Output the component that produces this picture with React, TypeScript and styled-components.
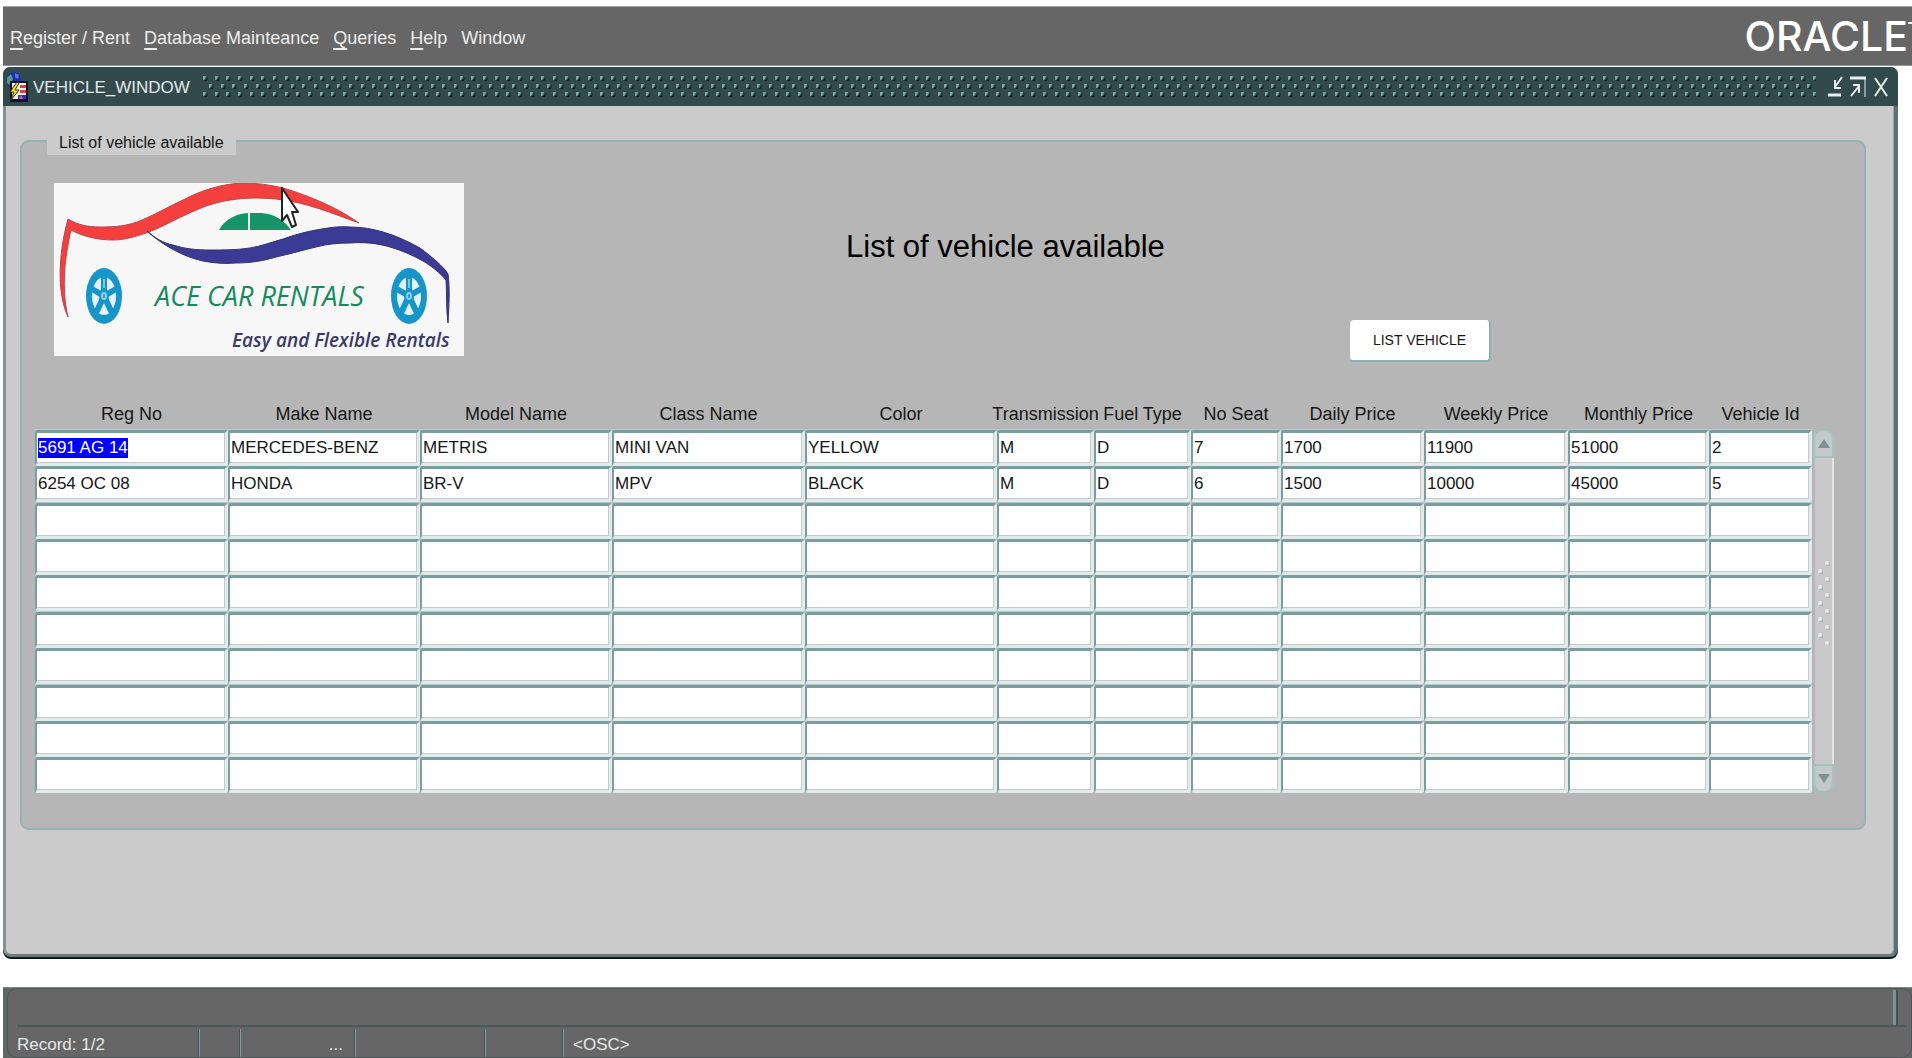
import React, { useEffect, useRef } from "react";
import styled, { createGlobalStyle } from "styled-components";

const teal = "#7a9ea0";
const slate = "#324a4b";
const chrome = "#666666";
const canvas = "#cbcbcb";
const panel = "#b6b6b6";

const GlobalStyle = createGlobalStyle`
  *, *::before, *::after { box-sizing: border-box; }
  body {
    margin: 0;
    background: #fff;
    color: #161616;
    font: 17px/24px "Liberation Sans", Arial, sans-serif;
  }
  button, input { font: inherit; color: inherit; }
`;

const Page = styled.div`
  display: flex;
  flex-direction: column;
  min-height: 100vh;
  padding: 6px 0 0 3px;
  overflow: hidden;
`;

const MenuBar = styled.header`
  display: flex;
  justify-content: space-between;
  align-items: center;
  height: 60px;
  padding-left: 7px;
  background: ${chrome};
  border-top: 1px solid #9aa5a5;
  border-bottom: 1px solid #8d9999;
  color: #ececec;
`;

const Menus = styled.nav`
  display: flex;
  gap: 14px;
  font-size: 18px;
`;

const MenuItem = styled.button`
  padding: 4px 0 0;
  border: 0;
  background: none;
  white-space: nowrap;

  u {
    text-decoration-thickness: 2px;
    text-underline-offset: 4px;
  }
`;

const Brand = styled.div`
  display: flex;
  align-items: flex-start;
  font: 500 41px/44px Inter, "Liberation Sans", sans-serif;
  color: #fff;

  &::after {
    content: "";
    width: 4px;
    height: 2px;
    margin-top: 8px;
    background: #fff;
  }
`;

const Window = styled.main`
  display: flex;
  flex: 1;
  flex-direction: column;
  margin: 1px 14px 30px 0;
  background: ${canvas};
  border: solid;
  border-width: 0 4px 3px 3px;
  border-color: ${slate} #5c7274 #6c7c7c #7c9597;
  border-radius: 8px;
  box-shadow: inset -1px 0 0 #93a7a8, 0 2px 0 #0c1a1c;
`;

const TitleBar = styled.div`
  display: flex;
  align-items: center;
  gap: 5px;
  height: 39px;
  margin: 0 -4px 0 -3px;
  padding: 0 9px 0 3px;
  background: ${slate};
  border-radius: 7px 7px 0 0;
  color: #e4e9e9;
`;

const WindowTitle = styled.h1`
  margin: 0;
  padding-top: 2px;
  font-size: 17px;
  font-weight: 400;
`;

const DotField = styled.svg`
  flex: 1;
  min-width: 0;
  height: 22px;
  margin: 0 6px 0 8px;
`;

const WindowControls = styled.div`
  display: flex;
  gap: 7px;
`;

const ControlButton = styled.button`
  display: grid;
  place-items: center;
  width: 16px;
  height: 24px;
  padding: 0;
  border: 0;
  background: none;
  color: #e8eeee;
`;

const WindowBody = styled.div`
  padding: 21px 28px 20px 14px;
`;

const Group = styled.fieldset`
  min-width: 0;
  margin: 0;
  padding: 0 30px 35px 13px;
  background: ${panel};
  border: 2px solid #94b3b5;
  border-radius: 9px;
`;

const GroupLabel = styled.legend`
  height: 28px;
  margin-left: 12px;
  padding: 4px 12px 0 12px;
  background: ${canvas};
  font-size: 16px;
`;

const Banner = styled.div`
  display: grid;
  grid-template-columns: 811fr 504fr 484fr;
  align-items: start;
  height: 242px;
  padding-top: 28px;
`;

const LogoFrame = styled.div`
  position: relative;
  width: 410px;
  height: 173px;
  margin-left: 19px;
  background: #f7f7f7;
`;

const Pointer = styled.svg`
  position: absolute;
  left: 227px;
  top: 4px;
`;

const Heading = styled.h2`
  margin: 0;
  padding-top: 42px;
  color: #000;
  font-size: 31px;
  font-weight: 400;
  line-height: 44px;
  white-space: nowrap;
`;

const ListButton = styled.button`
  justify-self: start;
  width: 141px;
  height: 42px;
  margin-top: 137px;
  padding: 0;
  background: #fff;
  border: solid #8fb0b2;
  border-width: 0 2px 2px 0;
  border-radius: 4px;
  font-size: 14px;
`;

const Block = styled.div`
  display: flex;
`;

const Grid = styled.table`
  flex: 1;
  width: 100%;
  min-width: 0;
  table-layout: fixed;
  border-collapse: collapse;
`;

const HeadCell = styled.th`
  height: 32px;
  padding: 2px 0 0;
  font-size: 18px;
  font-weight: 400;

  span {
    display: flex;
    justify-content: center;
    white-space: nowrap;
  }
`;

const Row = styled.tr`
  height: 36px;
  &:nth-child(5n + 1), &:nth-child(5n + 3) { height: 37px; }
`;

const Cell = styled.td`
  height: inherit;
  padding: 0;
  background: #b9c6c6;
`;

const Field = styled.input`
  display: block;
  width: 100%;
  height: 36px;
  padding: 0 0 0 1px;
  background: #fff;
  border: solid;
  border-width: 3px 3px 3px 2px;
  border-color: ${teal} #e2ebeb #e2ebeb ${teal};
  border-radius: 3px;
  box-shadow: inset -1px -1px 0 #c9c9c9;
  line-height: 30px;
  outline: 0;

  &::selection { background: #0000ff; color: #fff; }
`;

const ScrollBar = styled.div`
  display: flex;
  flex: none;
  flex-direction: column;
  width: 21px;
  margin: 32px 0 0 1px;
`;

const ScrollButton = styled.button<{ $end?: boolean }>`
  display: grid;
  place-items: center;
  height: 29px;
  padding: 0;
  background: #c4c8c8;
  border: 2px solid #a5c2c3;
  border-radius: ${(p) => (p.$end ? "2px 2px 10px 10px" : "10px 10px 2px 2px")};
`;

const Thumb = styled.div`
  display: grid;
  flex: 1;
  place-items: center;
  margin: 0 0 0 2px;
  padding-bottom: 16px;
  background: #c9c9c9;
  border-right: 2px solid #e4e4e4;
`;

const StatusBar = styled.footer`
  height: 71px;
  padding-left: 4px;
  background: #5f6664;
  border-top: 1px solid #7f8c8b;
`;

const StatusInner = styled.div`
  height: 70px;
  background: ${chrome};
  border: 1px solid #465856;
  border-radius: 10px;
`;

const MessageLine = styled.div`
  display: flex;
  justify-content: flex-end;
  height: 38px;
  margin: 0 6px 0 9px;
  padding: 1px 7px 0 0;
  border-bottom: 2px solid #4c5856;

  &::after {
    content: "";
    width: 5px;
    background: #3f5558;
    border-left: 3px solid #7b9292;
  }
`;

const StatusLine = styled.div`
  display: flex;
  height: 30px;
  padding-top: 2px;
  color: #e6e6e6;
`;

const StatusCell = styled.div<{ $width?: number; $end?: boolean }>`
  flex: ${(p) => (p.$width ? `0 0 ${p.$width}px` : "1")};
  padding: 4px 12px 0 9px;
  text-align: ${(p) => (p.$end ? "right" : "left")};
  border-right: ${(p) => (p.$width ? "1px solid #7fa0a0" : "0")};
  box-shadow: ${(p) => (p.$width ? "inset -1px 0 0 #3f5558" : "none")};
`;

const menus = [
  { key: "R", rest: "egister / Rent" },
  { key: "D", rest: "atabase Mainteance" },
  { key: "Q", rest: "ueries" },
  { key: "H", rest: "elp" },
  { key: "", rest: "Window" },
];

const columns = [
  { label: "Reg No", width: 193 },
  { label: "Make Name", width: 192 },
  { label: "Model Name", width: 192 },
  { label: "Class Name", width: 193 },
  { label: "Color", width: 192 },
  { label: "Transmission", width: 97 },
  { label: "Fuel Type", width: 97 },
  { label: "No Seat", width: 90 },
  { label: "Daily Price", width: 143 },
  { label: "Weekly Price", width: 144 },
  { label: "Monthly Price", width: 141 },
  { label: "Vehicle Id", width: 103 },
];

const vehicles = [
  ["5691 AG 14", "MERCEDES-BENZ", "METRIS", "MINI VAN", "YELLOW", "M", "D", "7", "1700", "11900", "51000", "2"],
  ["6254 OC 08", "HONDA", "BR-V", "MPV", "BLACK", "M", "D", "6", "1500", "10000", "45000", "5"],
];

const rows = Array.from({ length: 10 }, (_, i) => vehicles[i] ?? columns.map(() => ""));

const FormsIcon = () => (
  <svg width="22" height="32" viewBox="0 0 22 32" aria-hidden="true">
    <ellipse cx="8" cy="9" rx="7" ry="8" fill="#1f2fb4" />
    <path d="M1 7 L5 3 L7 8 L4 14 L1 12Z" fill="#4f9a8c" />
    <path d="M9 2 L13 4 L12 8 L9 6Z" fill="#5a74e0" />
    <rect x="4" y="10" width="18" height="21" fill="#101030" />
    <rect x="6" y="12" width="14" height="16" fill="#f0f0f4" />
    <path d="M14 14h6v3h-6zM14 19h6v3h-6z" fill="#e0404a" />
    <path d="M12 24h8v4h-8z" fill="#2436c8" />
    <path d="M15 24l2 4h-4z" fill="#e86a50" />
    <path d="M11 11 L4 21 L8 21 L5 29 L13 19 L9 19 L13 12Z" fill="#f5e02a" stroke="#3a3410" strokeWidth="1" />
  </svg>
);

const Dot = ({ x, y }: { x: number; y: number }) => (
  <>
    <path d={`M${x + 1} ${y + 5} L${x + 5} ${y + 1} L${x + 4} ${y + 5}Z`} fill="#0c2022" />
    <path d={`M${x} ${y} h3 l-1 3 l-1 1 h-1z`} fill="#7aaaa8" />
  </>
);

const TitleDots = () => (
  <DotField aria-hidden="true">
    <defs>
      <pattern id="dots" width="35" height="22" patternUnits="userSpaceOnUse">
        {[0, 12, 23].map((x) => (
          <g key={x}>
            <Dot x={x} y={0} />
            <Dot x={x + 6} y={8} />
            <Dot x={x} y={16} />
          </g>
        ))}
      </pattern>
    </defs>
    <rect width="100%" height="22" fill="url(#dots)" />
  </DotField>
);

const Wheel = ({ x }: { x: number }) => (
  <g transform={`translate(${x} 113)`}>
    <ellipse rx="18" ry="28" fill="#1595c8" />
    <ellipse rx="12" ry="19" fill="#e2f1f8" />
    <g stroke="#1595c8" strokeWidth="6">
      <path d="M0 0V-20M0 0L12 -7M0 0L8 17M0 0L-8 17M0 0L-12 -7" />
    </g>
    <path d="M0 -8V-17" stroke="#7cc6e2" strokeWidth="2" />
    <ellipse rx="5" ry="7" fill="#1595c8" />
    <ellipse rx="3" ry="4" fill="#8fd0e8" />
    <ellipse rx="1" ry="2" fill="#1595c8" />
  </g>
);

const Logo = () => (
  <svg width="410" height="173" viewBox="0 0 410 173" role="img" aria-label="Ace Car Rentals">
    <path
      d="M14 36 C24 42 34 44 46 44 C62 44 74 43 88 37 C102 31 114 24 129 17 C148 7 167 1 189 0 C203 0 217 2 229 5 C256 13 284 25 305 40 C280 31 252 19 222 16 C200 14 181 15 162 20 C150 23 140 28 129 33 C116 39 104 46 92 50 C80 54 70 57 59 57 C45 57 30 54 17 47 C11 74 7 104 14 134 C3 110 4 72 14 36Z"
      fill="#f3403f"
      stroke="#b8484c"
      strokeWidth="1"
    />
    <path
      d="M93 48 C101 55 109 60 119 62 C131 66 143 67 156 67 C170 67 183 67 196 65 C208 63 218 59 229 56 C240 52 251 49 262 47 C273 45 284 43 296 44 C308 44 319 46 329 49 C343 53 355 59 366 65 C378 74 390 84 394 91 C396 105 395 123 394 140 C392 126 393 110 392 97 C386 90 379 84 369 78 C358 72 347 67 336 64 C323 60 309 59 296 60 C284 60 273 61 262 64 C249 67 236 71 222 74 C209 78 196 80 182 80 C170 81 159 80 149 78 C130 74 108 62 93 48Z"
      fill="#3b3b96"
      stroke="#34346a"
      strokeWidth="1"
    />
    <path d="M165 47 C171 36 183 30 196 30 H208 C221 31 231 38 237 47Z" fill="#159468" />
    <path d="M195 29V47" stroke="#f4faf7" strokeWidth="2" />
    <Wheel x={50} />
    <Wheel x={355} />
    <text x="101" y="123" fill="#168a5c" fontFamily="Open Sans, Noto Sans, sans-serif" fontStyle="italic" fontSize="27" fontWeight="500">
      ACE CAR RENTALS
    </text>
    <text x="178" y="164" fill="#3a3a68" fontFamily="Open Sans, Noto Sans, sans-serif" fontStyle="italic" fontSize="19" fontWeight="600">
      Easy and Flexible Rentals
    </text>
  </svg>
);

const MinimizeIcon = () => (
  <svg width="16" height="22" viewBox="0 0 16 22" fill="none" stroke="currentColor" strokeWidth="2" aria-hidden="true">
    <path d="M15 1L8 11M8 4V12H14" />
    <path d="M1 19H14" strokeWidth="3" />
  </svg>
);

const RestoreIcon = () => (
  <svg width="16" height="22" viewBox="0 0 16 22" fill="none" stroke="currentColor" strokeWidth="2" aria-hidden="true">
    <path d="M0 2H16" strokeWidth="3" />
    <path d="M15 2V21" strokeWidth="1" />
    <path d="M1 20L9 10M3 9H9V17" />
  </svg>
);

const CloseIcon = () => (
  <svg width="16" height="22" viewBox="0 0 16 22" fill="none" stroke="currentColor" strokeWidth="2" aria-hidden="true">
    <path d="M2 2L14 20M14 2L2 20" />
  </svg>
);

const Grip = () => (
  <svg width="14" height="84" viewBox="0 0 14 84" aria-hidden="true">
    {Array.from({ length: 11 }, (_, i) => (
      <g key={i}>
        <circle cx={i % 2 ? 4 : 11} cy={3 + i * 8} r="2" fill="#9fb6b6" />
        <circle cx={i % 2 ? 3 : 10} cy={2 + i * 8} r="2" fill="#e4efef" />
      </g>
    ))}
  </svg>
);

export default function App() {
  const current = useRef<HTMLInputElement>(null);

  useEffect(() => {
    current.current?.focus();
    current.current?.select();
  }, []);

  return (
    <>
      <GlobalStyle />
      <Page>
        <MenuBar>
          <Menus>
            {menus.map((m) => (
              <MenuItem key={m.rest} type="button">
                {m.key && <u>{m.key}</u>}
                {m.rest}
              </MenuItem>
            ))}
          </Menus>
          <Brand>ORACLE</Brand>
        </MenuBar>

        <Window>
          <TitleBar>
            <FormsIcon />
            <WindowTitle>VEHICLE_WINDOW</WindowTitle>
            <TitleDots />
            <WindowControls>
              <ControlButton type="button" aria-label="Minimize"><MinimizeIcon /></ControlButton>
              <ControlButton type="button" aria-label="Restore"><RestoreIcon /></ControlButton>
              <ControlButton type="button" aria-label="Close"><CloseIcon /></ControlButton>
            </WindowControls>
          </TitleBar>

          <WindowBody>
            <Group>
              <GroupLabel>List of vehicle available</GroupLabel>
              <Banner>
                <LogoFrame>
                  <Logo />
                  <Pointer width="20" height="42" viewBox="0 0 20 42" aria-hidden="true">
                    <path
                      d="M1 1V34L6 28L11 40L15 38L11 25H17Z"
                      fill="#fff"
                      stroke="#222"
                      strokeWidth="2"
                      strokeLinejoin="round"
                    />
                  </Pointer>
                </LogoFrame>
                <Heading>List of vehicle available</Heading>
                <ListButton type="button">LIST VEHICLE</ListButton>
              </Banner>

              <Block>
                <Grid>
                  <colgroup>
                    {columns.map((c) => (
                      <col key={c.label} width={c.width} />
                    ))}
                  </colgroup>
                  <thead>
                    <tr>
                      {columns.map((c) => (
                        <HeadCell key={c.label} scope="col"><span>{c.label}</span></HeadCell>
                      ))}
                    </tr>
                  </thead>
                  <tbody>
                    {rows.map((row, r) => (
                      <Row key={r}>
                        {row.map((value, c) => (
                          <Cell key={c}>
                            <Field
                              ref={r === 0 && c === 0 ? current : undefined}
                              aria-label={`${columns[c].label}, row ${r + 1}`}
                              defaultValue={value}
                            />
                          </Cell>
                        ))}
                      </Row>
                    ))}
                  </tbody>
                </Grid>
                <ScrollBar>
                  <ScrollButton type="button" aria-label="Scroll up">
                    <svg width="12" height="9" viewBox="0 0 12 9" aria-hidden="true"><path d="M6 0L12 9H0Z" fill="#7d9292" /></svg>
                  </ScrollButton>
                  <Thumb><Grip /></Thumb>
                  <ScrollButton type="button" aria-label="Scroll down" $end>
                    <svg width="12" height="9" viewBox="0 0 12 9" aria-hidden="true"><path d="M0 0H12L6 9Z" fill="#7d9292" /></svg>
                  </ScrollButton>
                </ScrollBar>
              </Block>
            </Group>
          </WindowBody>
        </Window>

        <StatusBar>
          <StatusInner>
            <MessageLine />
            <StatusLine>
              <StatusCell $width={192}>Record: 1/2</StatusCell>
              <StatusCell $width={41} />
              <StatusCell $width={115} $end>...</StatusCell>
              <StatusCell $width={130} />
              <StatusCell $width={78} />
              <StatusCell>&lt;OSC&gt;</StatusCell>
            </StatusLine>
          </StatusInner>
        </StatusBar>
      </Page>
    </>
  );
}
